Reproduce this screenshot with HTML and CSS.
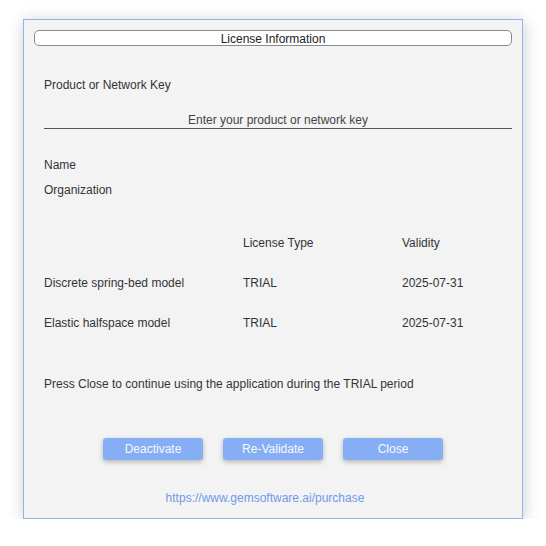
FILE: index.html
```html
<!DOCTYPE html>
<html>
<head>
<meta charset="utf-8">
<link rel="stylesheet" href="styles.css">
</head>
<body>
<div class="page">
  <div class="dialog">
    <div class="title">License Information</div>
    <div class="label product">Product or Network Key</div>
    <div class="keyfield">Enter your product or network key</div>
    <div class="label name">Name</div>
    <div class="label org">Organization</div>
    <div class="table">
      <div></div><div>License Type</div><div>Validity</div>
      <div>Discrete spring-bed model</div><div>TRIAL</div><div>2025-07-31</div>
      <div>Elastic halfspace model</div><div>TRIAL</div><div>2025-07-31</div>
    </div>
    <div class="label press">Press Close to continue using the application during the TRIAL period</div>
    <div class="buttons">
      <div class="btn">Deactivate</div>
      <div class="btn">Re-Validate</div>
      <div class="btn">Close</div>
    </div>
    <div class="link">https://www.gemsoftware.ai/purchase</div>
  </div>
</div>
</body>
</html>
```
FILE: styles.css
```css
html, body {
  margin: 0;
  padding: 0;
  background: #ffffff;
}
body {
  font-family: "Liberation Sans", Arial, sans-serif;
  font-size: 12px;
  line-height: 14px;
  color: #333333;
}
.page {
  padding: 19px 0 0 23px;
}
.dialog {
  box-sizing: border-box;
  width: 500px;
  height: 500px;
  border: 1px solid #8fb4f0;
  background: #f3f3f3;
  box-shadow: 1px 2px 16px rgba(0, 0, 0, 0.2);
  padding: 10px;
}
.title {
  box-sizing: border-box;
  height: 16px;
  border: 1px solid #8a8a8a;
  border-radius: 5px;
  background: #ffffff;
  text-align: center;
  padding-top: 2px;
  line-height: 12px;
  color: #222222;
}
.label {
  padding-left: 10px;
}
.product { margin-top: 32px; }
.keyfield {
  margin-top: 21px;
  margin-left: 10px;
  padding-bottom: 1px;
  border-bottom: 1px solid #555555;
  text-align: center;
  color: #444444;
}
.name { margin-top: 29px; }
.org { margin-top: 11px; }
.table {
  margin-top: 39px;
  padding-left: 10px;
  display: grid;
  grid-template-columns: 199px 159px 1fr;
  row-gap: 26px;
}
.press { margin-top: 47px; }
.buttons {
  margin-top: 47px;
  display: flex;
  justify-content: center;
  gap: 20px;
}
.btn {
  width: 100px;
  height: 22px;
  line-height: 22px;
  text-align: center;
  background: #86aef4;
  color: #f7f9ff;
  border-radius: 3px;
  box-shadow: 0 2px 5px rgba(0, 0, 0, 0.25);
}
.link {
  margin-top: 31px;
  text-align: center;
  padding-right: 16px;
  color: #6f9ae8;
}
```
